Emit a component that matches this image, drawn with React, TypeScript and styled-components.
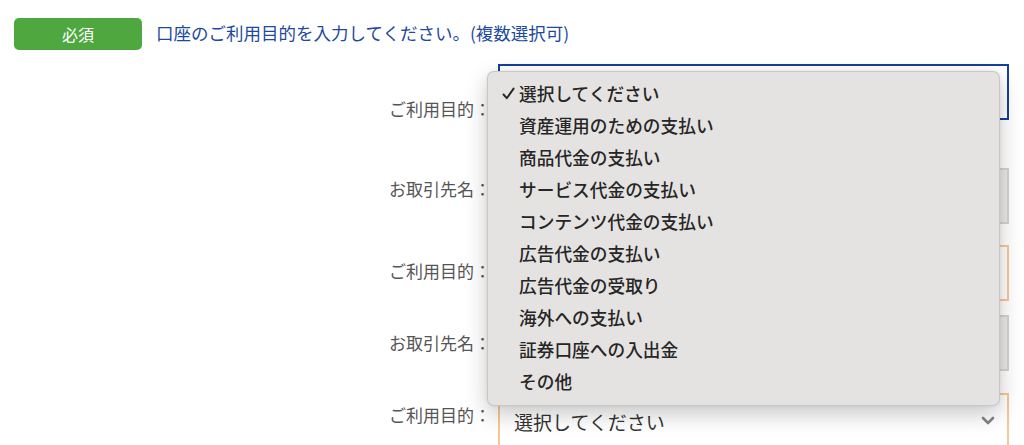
import React from 'react';
import styled, { createGlobalStyle } from 'styled-components';

const GlobalStyle = createGlobalStyle`
  html, body {
    margin: 0;
    padding: 0;
    background: #ffffff;
    overflow: hidden;
  }
  body {
    font-family: "Noto Sans CJK JP", "Noto Sans", "Liberation Sans", sans-serif;
  }
`;

const Page = styled.div`
  width: 1024px;
  height: 445px;
  box-sizing: border-box;
  padding: 18px 15px 0 14px;
  overflow: hidden;
`;

const Header = styled.div`
  display: flex;
  align-items: center;
  gap: 14px;
  height: 32px;
`;

const Badge = styled.div`
  width: 128px;
  height: 32px;
  border-radius: 5px;
  background: #4fa73f;
  color: #ffffff;
  font-size: 16px;
  display: flex;
  align-items: center;
  justify-content: center;
`;

const Title = styled.div`
  font-size: 17.5px;
  color: #1d4a9d;
  margin-top: -3px;
`;

const Form = styled.div`
  display: flex;
  flex-direction: column;
`;

const Row = styled.div<{ $gap: number }>`
  display: grid;
  grid-template-columns: 1fr 511px;
  column-gap: 7px;
  align-items: start;
  margin-top: ${p => p.$gap}px;
`;

const Label = styled.div<{ $top: number }>`
  padding-top: ${p => p.$top}px;
  text-align: right;
  font-size: 17px;
  line-height: 24px;
  color: #555555;
`;

type Tone = 'focus' | 'disabled' | 'required';

const fieldBorder: Record<Tone, string> = {
  focus: '#153f9c',
  disabled: '#d3d3d3',
  required: '#f7c896',
};

const Field = styled.div<{ $tone: Tone }>`
  position: relative;
  height: 56px;
  box-sizing: border-box;
  border: 2px solid ${p => fieldBorder[p.$tone]};
  background: ${p => (p.$tone === 'disabled' ? '#e9e9e9' : '#ffffff')};
  display: flex;
  align-items: center;
  justify-content: space-between;
  padding: 0 12px 0 14px;
`;

const FieldText = styled.span`
  font-size: 19px;
  color: #333333;
`;

const Chevron = styled.svg`
  width: 14px;
  height: 9px;
  margin-top: -2px;
`;

const Menu = styled.div`
  position: absolute;
  left: -13px;
  top: 5px;
  width: 513px;
  box-sizing: border-box;
  padding: 5px 0 8px;
  background: #e4e3e2;
  border: 1px solid rgba(0, 0, 0, 0.12);
  border-radius: 7px;
  box-shadow: 0 8px 22px rgba(0, 0, 0, 0.22), 0 0 4px rgba(0, 0, 0, 0.06);
  z-index: 10;
`;

const MenuItem = styled.div`
  display: flex;
  align-items: center;
  height: 32px;
  padding-left: 13px;
  font-size: 17.7px;
  font-weight: 500;
  color: #262626;
`;

const CheckSlot = styled.span`
  width: 18px;
  height: 14px;
  display: flex;
  align-items: center;
`;

const CheckIcon = styled.svg`
  width: 13px;
  height: 13px;
  margin-left: 1px;
`;

const options = [
  '選択してください',
  '資産運用のための支払い',
  '商品代金の支払い',
  'サービス代金の支払い',
  'コンテンツ代金の支払い',
  '広告代金の支払い',
  '広告代金の受取り',
  '海外への支払い',
  '証券口座への入出金',
  'その他',
];

const SelectChevron = () => (
  <Chevron viewBox="0 0 14 9">
    <path d="M2 2 L7 7 L12 2" fill="none" stroke="#858585" strokeWidth="2.6" strokeLinecap="round" strokeLinejoin="round" />
  </Chevron>
);

const rows: { label: string; tone: Tone; gap: number; top: number; text?: string; menu?: boolean }[] = [
  { label: 'ご利用目的：', tone: 'focus', gap: 14, top: 33, menu: true },
  { label: 'お取引先名：', tone: 'disabled', gap: 47, top: 9 },
  { label: 'ご利用目的：', tone: 'required', gap: 21, top: 14 },
  { label: 'お取引先名：', tone: 'disabled', gap: 14, top: 16 },
  { label: 'ご利用目的：', tone: 'required', gap: 22, top: 10, text: '選択してください' },
];

export default function App() {
  return (
    <>
      <GlobalStyle />
      <Page>
        <Header>
          <Badge>必須</Badge>
          <Title>口座のご利用目的を入力してください。(複数選択可)</Title>
        </Header>
        <Form>
          {rows.map((r, i) => (
            <Row key={i} $gap={r.gap}>
              <Label $top={r.top}>{r.label}</Label>
              <Field $tone={r.tone}>
                {r.text && (
                  <>
                    <FieldText>{r.text}</FieldText>
                    <SelectChevron />
                  </>
                )}
                {r.menu && (
                  <Menu>
                    {options.map((o, j) => (
                      <MenuItem key={o}>
                        <CheckSlot>
                          {j === 0 && (
                            <CheckIcon viewBox="0 0 13 13">
                              <path d="M1.5 7.5 L4.8 11.2 L11.6 1.6" fill="none" stroke="#262626" strokeWidth="1.9" strokeLinecap="round" strokeLinejoin="round" />
                            </CheckIcon>
                          )}
                        </CheckSlot>
                        {o}
                      </MenuItem>
                    ))}
                  </Menu>
                )}
              </Field>
            </Row>
          ))}
        </Form>
      </Page>
    </>
  );
}
